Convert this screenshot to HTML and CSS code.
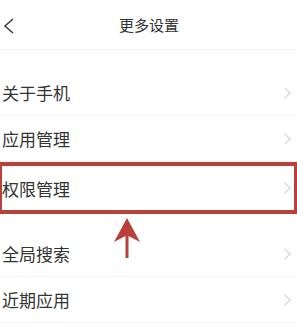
FILE: index.html
```html
<!DOCTYPE html>
<html lang="zh-CN">
<head>
  <meta charset="UTF-8">
  <title>更多设置</title>
  <link rel="stylesheet" href="styles.css">
</head>
<body>

  <div class="header">
    <svg class="back" width="12" height="16" viewBox="0 0 12 16">
      <polyline points="10,1 2,8 10,15" fill="none" stroke="#333" stroke-width="1.4"/>
    </svg>
    <div class="title">更多设置</div>
  </div>

  <div class="list">
    <div class="row first">
      <span class="label">关于手机</span>
      <span class="chev"></span>
    </div>
    <div class="row">
      <span class="label">应用管理</span>
      <span class="chev"></span>
    </div>
    <div class="row marked">
      <span class="label">权限管理</span>
      <span class="chev"></span>
    </div>
  </div>

  <div class="list second">
    <div class="row">
      <span class="label">全局搜索</span>
      <span class="chev"></span>
    </div>
    <div class="row">
      <span class="label">近期应用</span>
      <span class="chev"></span>
    </div>
  </div>

  <!-- pointer under the highlighted row -->
  <svg class="arrow" width="30" height="42" viewBox="0 0 30 42">
    <polygon points="14,0 27,24 15.5,18 15.5,40 12.5,40 12.5,18 1,24" fill="#b8413a"/>
  </svg>

</body>
</html>
```

FILE: styles.css
```css
body {
  margin: 0;
  background-color: #fff;
  font-family: "Noto Sans CJK SC", "Noto Sans", sans-serif;
  color: #333;
  position: relative;
  width: 297px;
  height: 334px;
  overflow: hidden;
}

.header {
  height: 49px;
  border-bottom: 1px solid #f2f2f2;
  display: flex;
  align-items: center;
  justify-content: center;
  position: relative;
}

.back {
  position: absolute;
  left: 3px;
  top: 18px;
}

.title {
  font-size: 15px;
  color: #333;
  margin-left: 1px;
}

.list {
  padding-top: 20px;
}

.list.second {
  padding-top: 17px;
}

.row {
  height: 46px;
  display: flex;
  align-items: center;
  justify-content: space-between;
  padding: 0 6px 0 2px;
  border-bottom: 1px solid #f3f3f3;
  box-sizing: border-box;
}

.row.marked {
  height: 52px;
  border: 4px solid #b8413a;
  border-left-width: 2px;
  border-right-width: 3px;
  padding-left: 0;
  padding-right: 3px;
}

.label {
  font-size: 17px;
}

.chev {
  width: 7px;
  height: 7px;
  border-top: 1px solid #cfcfcf;
  border-right: 1px solid #cfcfcf;
  transform: rotate(45deg);
  margin-right: 2px;
}

.arrow {
  position: absolute;
  left: 113px;
  top: 218px;
}
```
